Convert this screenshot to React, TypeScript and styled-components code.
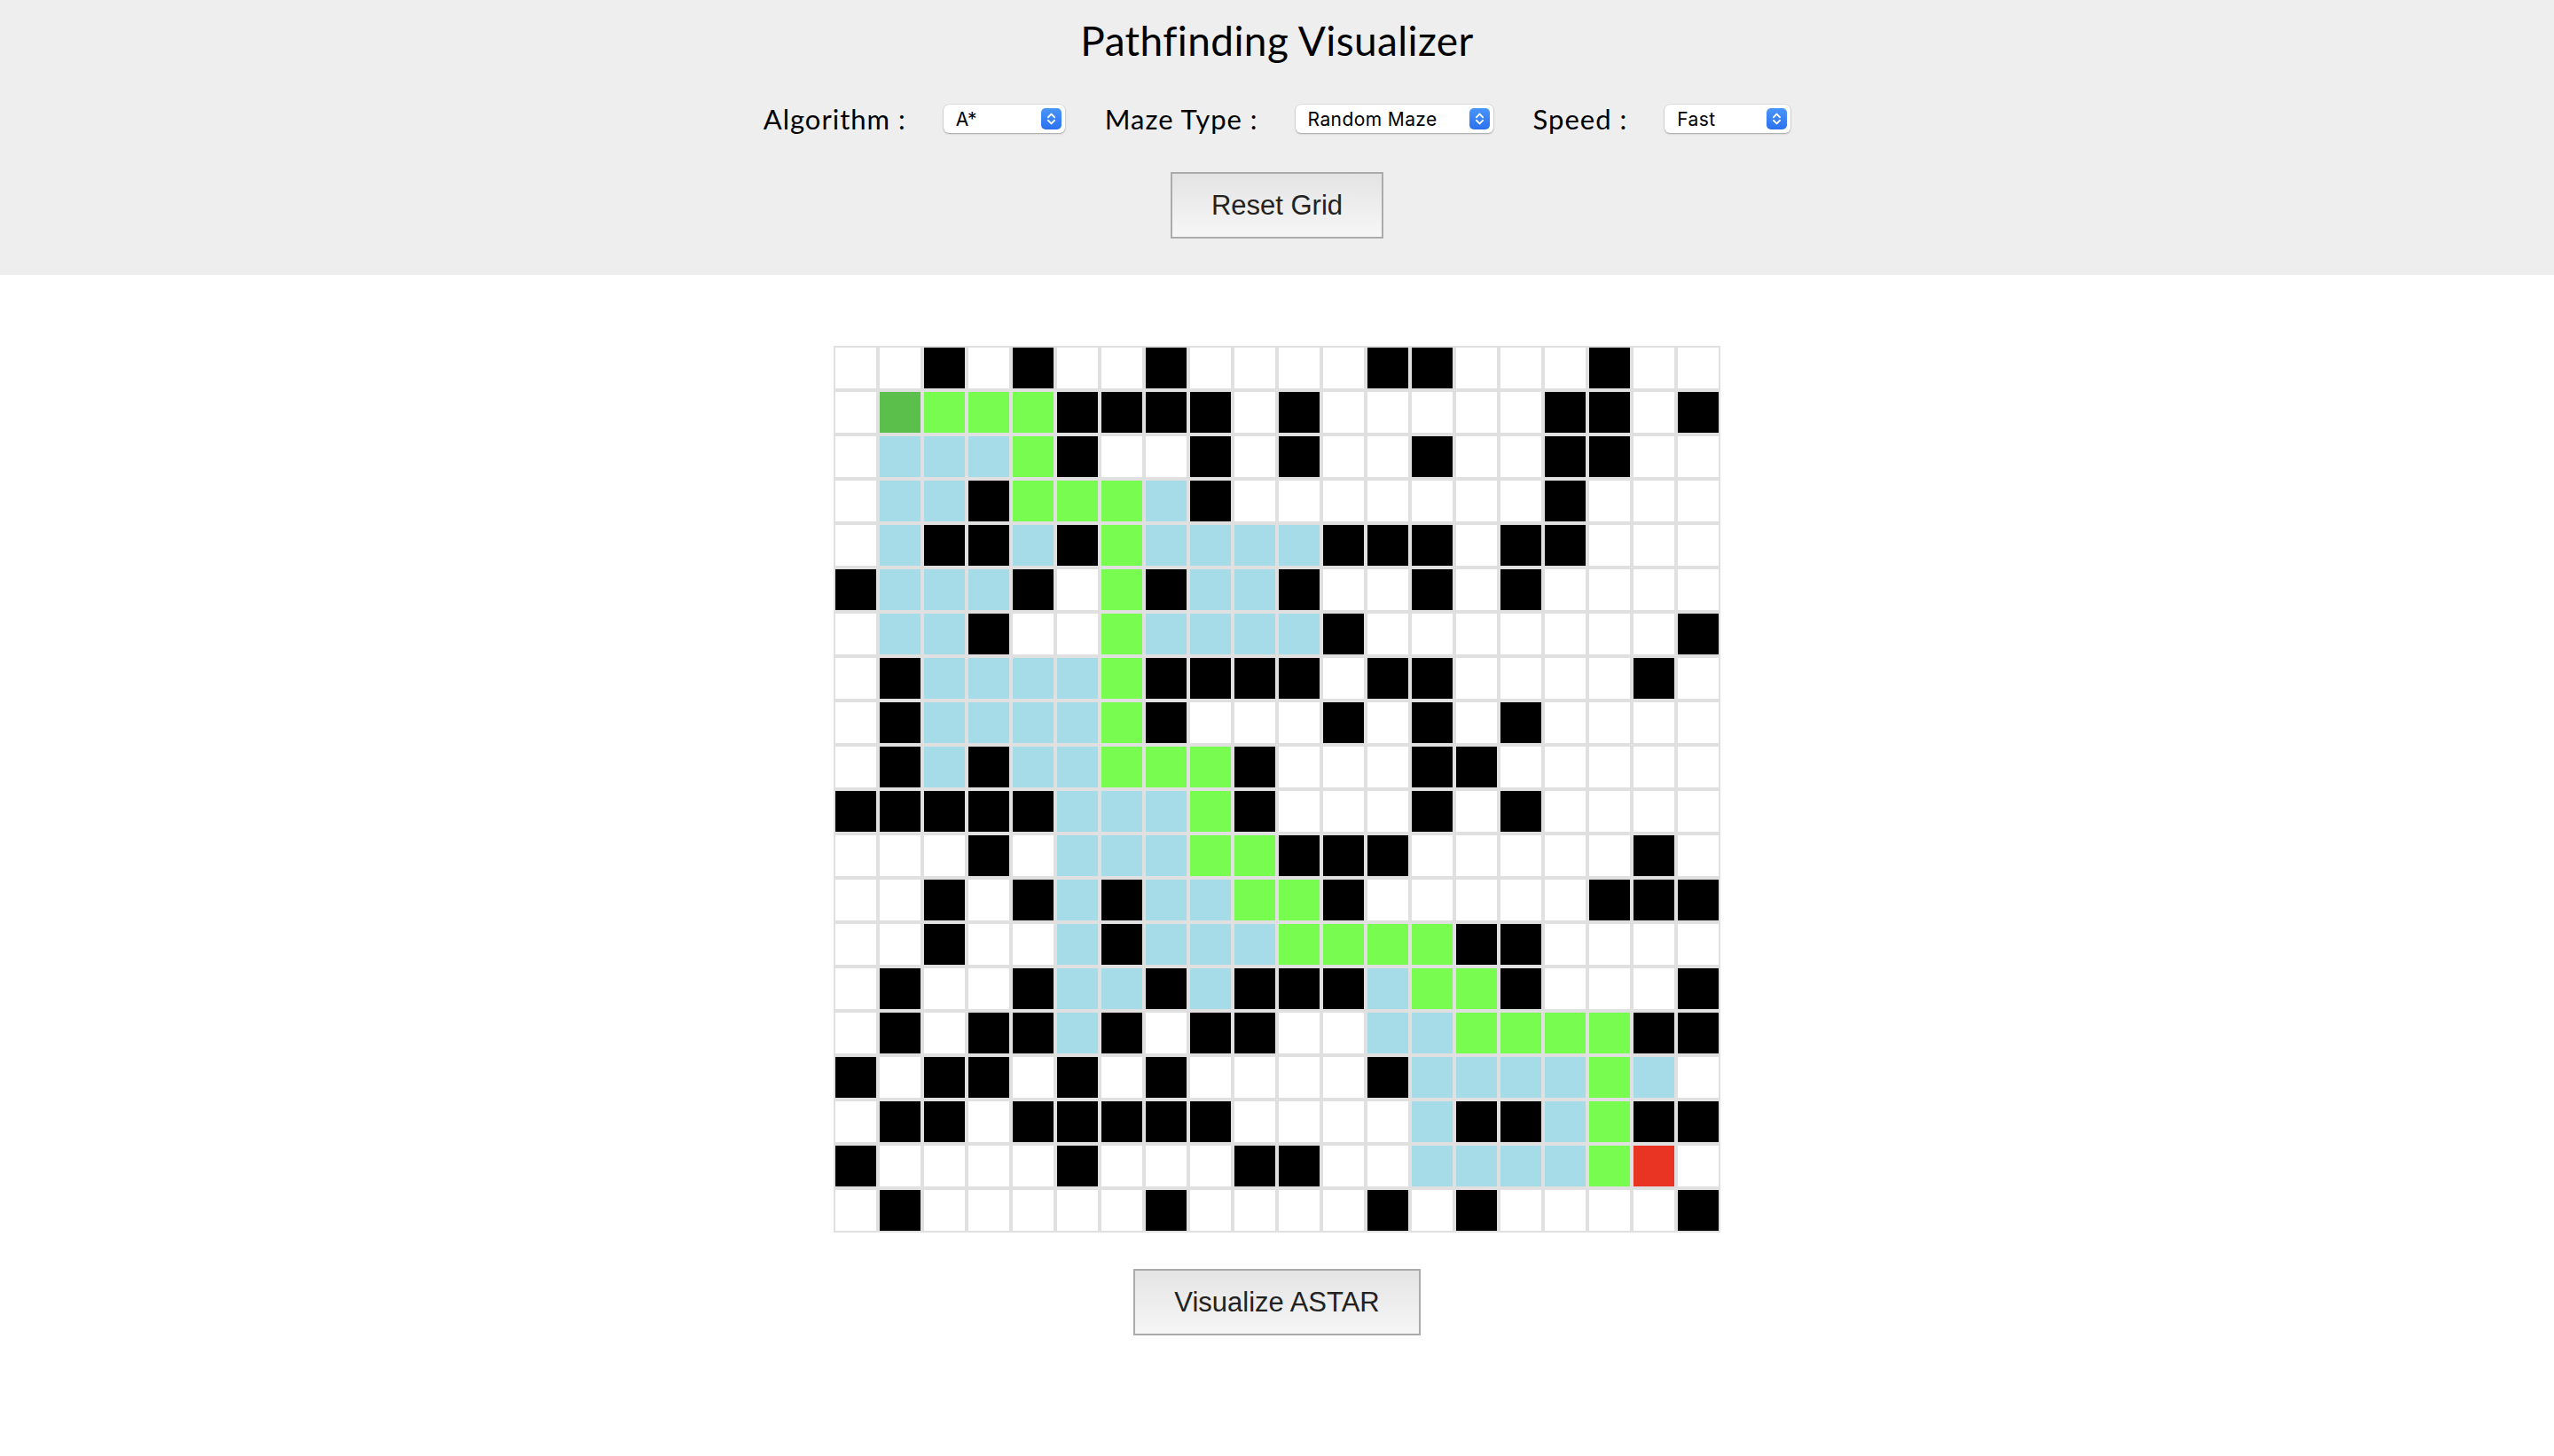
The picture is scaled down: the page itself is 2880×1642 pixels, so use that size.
import React from "react";
import styled, { createGlobalStyle } from "styled-components";

const GlobalStyle = createGlobalStyle`
  html, body {
    margin: 0;
    padding: 0;
    background: #ffffff;
  }
  * { box-sizing: border-box; }
`;

const Page = styled.div`
  min-height: 100vh;
  background: #ffffff;
  display: flex;
  flex-direction: column;
  align-items: stretch;
`;

const Header = styled.header`
  background: #eeeeee;
  padding: 18px 0 41px;
  display: flex;
  flex-direction: column;
  align-items: center;
`;

const Title = styled.h1`
  margin: 0;
  font-family: Lato, "Open Sans", sans-serif;
  font-weight: 400;
  font-size: 46px;
  line-height: 56px;
  color: #000;
  letter-spacing: 0.4px;
`;

const Controls = styled.div`
  margin-top: 44px;
  height: 32px;
  display: flex;
  align-items: center;
  justify-content: center;
`;

const Label = styled.label`
  font-family: Lato, "Open Sans", sans-serif;
  font-size: 31px;
  line-height: 32px;
  letter-spacing: 1px;
  color: #000;
  margin-right: 42px;
  white-space: nowrap;
`;

const SelectShell = styled.div<{ $w: number; $last?: boolean }>`
  position: relative;
  width: ${(p) => p.$w}px;
  height: 32px;
  background: #ffffff;
  border-radius: 6px;
  box-shadow: 0 0 0 0.5px rgba(0, 0, 0, 0.12), 0 1px 2px rgba(0, 0, 0, 0.28);
  margin-right: ${(p) => (p.$last ? 0 : 45)}px;
  display: flex;
  align-items: center;
`;

const NativeSelect = styled.select`
  appearance: none;
  -webkit-appearance: none;
  border: none;
  outline: none;
  background: transparent;
  width: 100%;
  height: 100%;
  padding: 0 32px 0 14px;
  font-family: Inter, Roboto, sans-serif;
  font-size: 21px;
  letter-spacing: 0.4px;
  color: #000;
`;

const Stepper = styled.span`
  position: absolute;
  right: 4px;
  top: 4px;
  width: 23px;
  height: 24px;
  border-radius: 5px;
  background: linear-gradient(#4a95fa, #2b71ef);
  display: flex;
  align-items: center;
  justify-content: center;
  pointer-events: none;
`;

const GrayButton = styled.button<{ $mt: number }>`
  margin-top: ${(p) => p.$mt}px;
  height: 75px;
  padding: 0 44px;
  border: 2px solid #ababab;
  border-radius: 0;
  background: linear-gradient(#e4e4e4, #f6f6f6);
  font-family: "Liberation Sans", Arial, sans-serif;
  font-size: 31px;
  color: #222222;
  cursor: pointer;
`;

const Main = styled.main`
  display: flex;
  flex-direction: column;
  align-items: center;
  padding-top: 80px;
`;

const Board = styled.div`
  display: grid;
  grid-template-columns: repeat(20, 50px);
  grid-auto-rows: 50px;
`;

const cellColors: Record<string, string> = {
  ".": "#ffffff",
  "#": "#000000",
  s: "#5bbf4c",
  e: "#e93323",
  v: "#a6dce7",
  p: "#77fc4f",
};

const Cell = styled.div<{ $kind: string }>`
  width: 50px;
  height: 50px;
  border: 2px solid #e0e0e0;
  background: ${(p) => cellColors[p.$kind]};
`;

const MAP = [
  "..#.#..#....##...#..",
  ".sppp####.#.....##.#",
  ".vvvp#..#.#..#..##..",
  ".vv#pppv#.......#...",
  ".v##v#pvvvv###.##...",
  "#vvv#.p#vv#..#.#....",
  ".vv#..pvvvv#.......#",
  ".#vvvvp####.##....#.",
  ".#vvvvp#...#.#.#....",
  ".#v#vvppp#...##.....",
  "#####vvvp#...#.#....",
  "...#.vvvpp###.....#.",
  "..#.#v#vvpp#.....###",
  "..#..v#vvvpppp##....",
  ".#..#vv#v###vpp#...#",
  ".#.##v#.##..vvpppp##",
  "#.##.#.#....#vvvvpv.",
  ".##.#####....v##vp##",
  "#....#...##..vvvvpe.",
  ".#.....#....#.#....#",
];

const Chevrons = () => (
  <svg width="23" height="24" viewBox="0 0 23 24" fill="none">
    <path d="M8 10.2 L11.5 6.6 L15 10.2" stroke="#fff" strokeWidth="1.9" strokeLinecap="round" strokeLinejoin="round" />
    <path d="M8 13.8 L11.5 17.4 L15 13.8" stroke="#fff" strokeWidth="1.9" strokeLinecap="round" strokeLinejoin="round" />
  </svg>
);

const Select = ({ width, value, options, last }: { width: number; value: string; options: string[]; last?: boolean }) => (
  <SelectShell $w={width} $last={last}>
    <NativeSelect defaultValue={value}>
      {options.map((o) => (
        <option key={o}>{o}</option>
      ))}
    </NativeSelect>
    <Stepper>
      <Chevrons />
    </Stepper>
  </SelectShell>
);

export default function App() {
  return (
    <Page>
      <GlobalStyle />
      <Header>
        <Title>Pathfinding Visualizer</Title>
        <Controls>
          <Label>Algorithm :</Label>
          <Select width={137} value="A*" options={["A*", "Dijkstra", "BFS", "DFS"]} />
          <Label>Maze Type :</Label>
          <Select width={223} value="Random Maze" options={["Random Maze", "Recursive Division", "No Maze"]} />
          <Label>Speed :</Label>
          <Select width={142} value="Fast" options={["Fast", "Medium", "Slow"]} last />
        </Controls>
        <GrayButton $mt={44}>Reset Grid</GrayButton>
      </Header>
      <Main>
        <Board>
          {MAP.map((row, r) =>
            row.split("").map((k, c) => <Cell key={`${r}-${c}`} $kind={k} />)
          )}
        </Board>
        <GrayButton $mt={41}>Visualize ASTAR</GrayButton>
      </Main>
    </Page>
  );
}
